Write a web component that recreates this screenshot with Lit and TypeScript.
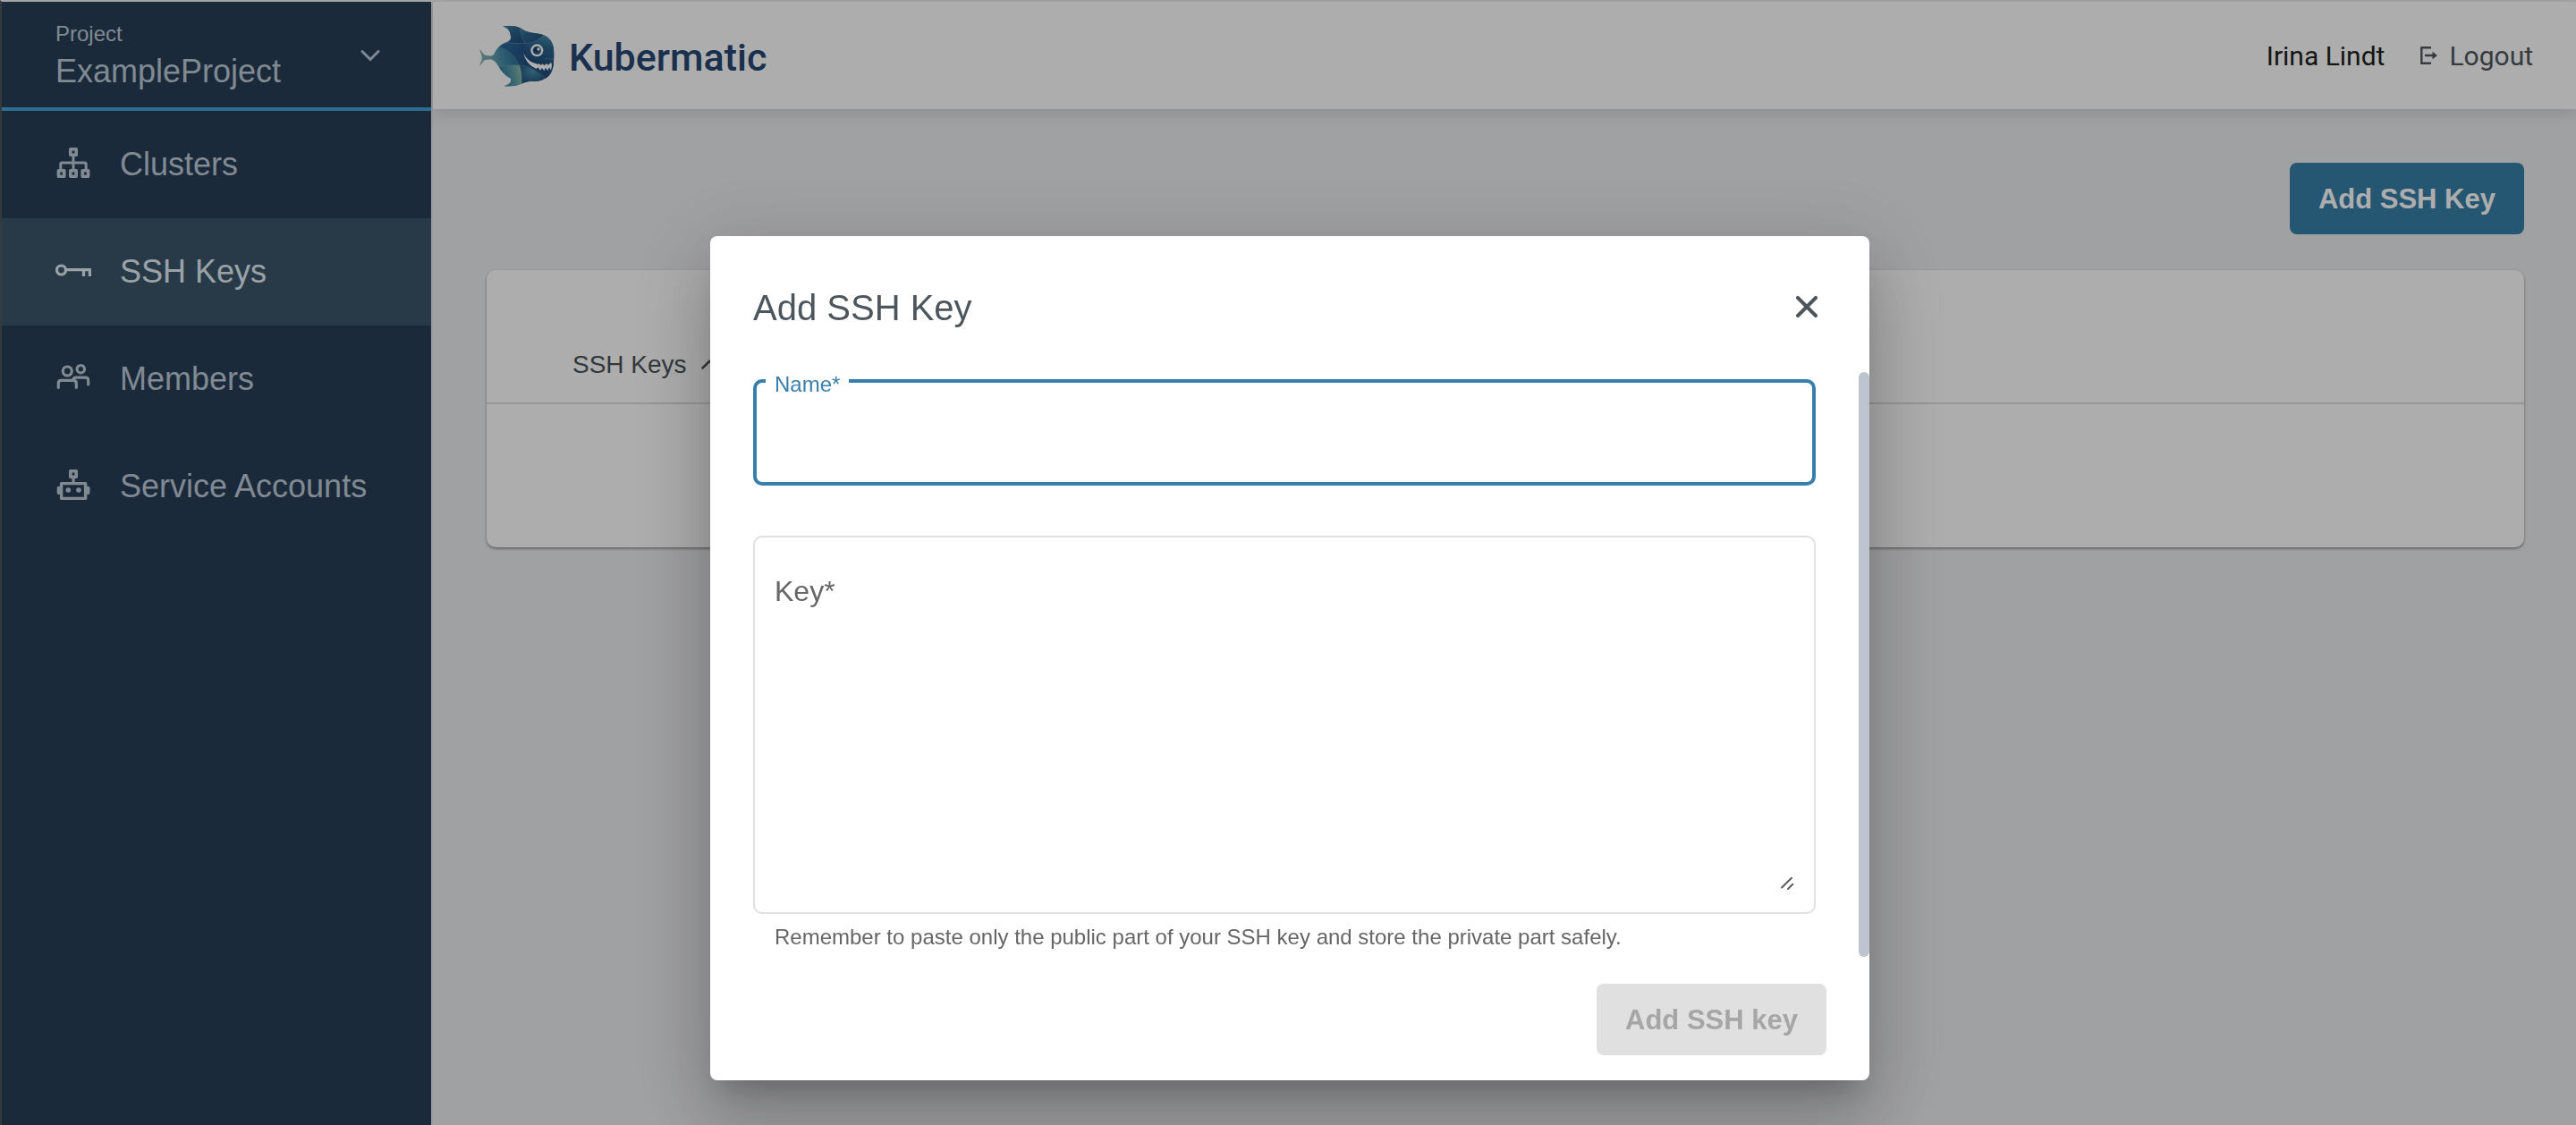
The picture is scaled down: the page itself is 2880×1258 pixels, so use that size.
import { LitElement, html, css, svg } from "lit";
import { customElement } from "lit/decorators.js";
import { classMap } from "lit/directives/class-map.js";

const clustersIcon = svg`
  <g fill="none" stroke="currentColor">
    <path stroke-width="3" d="M5.8 26V19.5Q5.8 18 7.3 18H32.7Q34.2 18 34.2 19.5V26M20 10V26" />
    <g stroke-width="3.6" stroke-linejoin="round">
      <rect x="16.8" y="2.8" width="6.4" height="6.4" />
      <rect x="3.4" y="26.8" width="6.4" height="6.4" />
      <rect x="16.8" y="26.8" width="6.4" height="6.4" />
      <rect x="30.2" y="26.8" width="6.4" height="6.4" />
    </g>
  </g>`;

const keyIcon = svg`
  <g fill="none" stroke="currentColor" stroke-width="3.2">
    <circle cx="6.5" cy="18" r="5" />
    <path d="M12 17.7H40M31.5 17V25M38.4 17V25" />
  </g>`;

const membersIcon = svg`
  <g fill="none" stroke="currentColor" stroke-width="3.2" stroke-linecap="round">
    <circle cx="13.3" cy="11" r="5" />
    <circle cx="28.3" cy="8.7" r="4.2" />
    <path d="M3.3 29.5V24.5Q3.3 21.3 6.5 21.3H20.1Q23.3 21.3 23.3 24.5V29.5" />
    <path d="M20 19.6Q21 18.2 23 18.2H33.5Q36.7 18.2 36.7 21.4V26" />
  </g>`;

const robotIcon = svg`
  <g fill="none" stroke="currentColor" stroke-linejoin="round">
    <rect x="16.8" y="2.8" width="6.4" height="6.4" stroke-width="3.6" />
    <path d="M20 10V16" stroke-width="3.2" />
    <rect x="6.6" y="16.6" width="27" height="16.8" stroke-width="3.4" />
  </g>
  <g fill="currentColor">
    <circle cx="14.3" cy="24" r="2.8" />
    <circle cx="26" cy="24" r="2.8" />
    <rect x="1.7" y="19.7" width="5" height="9.3" rx="2" />
    <rect x="33.5" y="19.7" width="5" height="9.3" rx="2" />
  </g>`;

const navItems = [
  { label: "Clusters", icon: clustersIcon, active: false },
  { label: "SSH Keys", icon: keyIcon, active: true },
  { label: "Members", icon: membersIcon, active: false },
  { label: "Service Accounts", icon: robotIcon, active: false },
];

@customElement("km-sidebar")
class KmSidebar extends LitElement {
  static styles = css`
    :host {
      display: block;
      box-sizing: border-box;
      width: 482px;
      background: #293f57;
      border-right: 2px solid #e2e3e6;
      color: #bfcad8;
      font-family: "Liberation Sans", Arial, sans-serif;
    }
    .project {
      box-sizing: border-box;
      display: flex;
      justify-content: space-between;
      align-items: center;
      width: 100%;
      height: 122px;
      margin: 0;
      padding: 0 58px 0 60px;
      border: 0;
      border-bottom: 4px solid #44a0d4;
      background: none;
      color: inherit;
      font: inherit;
      text-align: left;
    }
    .names {
      display: flex;
      flex-direction: column;
      padding-top: 6px;
    }
    .caption {
      font-size: 24px;
      line-height: 32px;
    }
    .name {
      font-size: 36px;
      line-height: 52px;
    }
    .chevron {
      width: 20px;
      height: 12px;
      padding-top: 2px;
      overflow: visible;
    }
    .item {
      display: flex;
      align-items: center;
      gap: 32px;
      height: 120px;
      padding-left: 60px;
      color: inherit;
      font-size: 36px;
      text-decoration: none;
    }
    .item.active {
      background: #3b566b;
      color: #e2eff5;
    }
    .icon {
      width: 40px;
      height: 40px;
    }
  `;

  render() {
    return html`
      <button class="project" type="button">
        <span class="names">
          <span class="caption">Project</span>
          <span class="name">ExampleProject</span>
        </span>
        <svg class="chevron" viewBox="0 0 20 12" aria-hidden="true">
          <path d="M1 1.5L10 10.5L19 1.5" fill="none" stroke="currentColor" stroke-width="3" stroke-linecap="round" />
        </svg>
      </button>
      <nav>
        ${navItems.map(
          (item) => html`
            <a class=${classMap({ item: true, active: item.active })} href="#">
              <svg class="icon" viewBox="0 0 40 40" aria-hidden="true">${item.icon}</svg>
              <span>${item.label}</span>
            </a>
          `
        )}
      </nav>
    `;
  }
}

@customElement("km-header")
class KmHeader extends LitElement {
  static styles = css`
    :host {
      box-sizing: border-box;
      display: flex;
      justify-content: space-between;
      align-items: center;
      height: 120px;
      padding: 0 48px 0 46px;
      background: #ffffff;
      box-shadow: 0 4px 16px rgba(0, 0, 0, 0.13);
      font-family: Roboto, sans-serif;
    }
    .brand {
      display: flex;
      align-items: center;
      gap: 6px;
      color: #284873;
      font-size: 43px;
      font-weight: 500;
      text-decoration: none;
    }
    .fish {
      width: 100px;
      height: 80px;
    }
    .text {
      padding-top: 4px;
    }
    .account {
      display: flex;
      align-items: center;
      gap: 40px;
      font-size: 30px;
      color: #1f1f1f;
    }
    .logout {
      display: flex;
      align-items: center;
      gap: 12px;
      color: #50585f;
      text-decoration: none;
    }
    .exit {
      width: 20px;
      height: 20px;
    }
  `;

  render() {
    return html`
      <a class="brand" href="#">
        <svg class="fish" viewBox="0 0 300 240" aria-hidden="true">
          <defs>
            <linearGradient id="body" gradientUnits="userSpaceOnUse" x1="20" y1="150" x2="225" y2="110">
              <stop offset="0" stop-color="#8fb8ac" />
              <stop offset="0.2" stop-color="#69a5b0" />
              <stop offset="0.42" stop-color="#3f86a6" />
              <stop offset="0.7" stop-color="#265f8d" />
              <stop offset="1" stop-color="#2b6088" />
            </linearGradient>
            <linearGradient id="mid" x1="0" y1="0" x2="1" y2="0.3">
              <stop offset="0" stop-color="#2e6c98" />
              <stop offset="1" stop-color="#204b7c" />
            </linearGradient>
            <linearGradient id="fin" x1="0" y1="0" x2="0.8" y2="1">
              <stop offset="0" stop-color="#498ea9" />
              <stop offset="0.5" stop-color="#2c638c" />
              <stop offset="1" stop-color="#234f7b" />
            </linearGradient>
            <linearGradient id="head" x1="0.8" y1="0" x2="0.6" y2="1">
              <stop offset="0" stop-color="#4b93ad" />
              <stop offset="0.35" stop-color="#2c6790" />
              <stop offset="1" stop-color="#1d4675" />
            </linearGradient>
            <linearGradient id="belly" x1="0.1" y1="0.7" x2="1" y2="0.5">
              <stop offset="0" stop-color="#327b9c" />
              <stop offset="0.6" stop-color="#589cae" />
              <stop offset="1" stop-color="#92b9a5" />
            </linearGradient>
            <radialGradient id="chin" cx="0.5" cy="0.35" r="0.6">
              <stop offset="0" stop-color="#4a8eaa" />
              <stop offset="1" stop-color="#23547f" />
            </radialGradient>
            <clipPath id="outline">
              <path d="M18 100C26 104 29 116 38 119C48 122 58 123 66 117C74 99 86 86 102 78C118 73 127 70 122 50C120 34 109 27 97 22C126 17 150 23 167 35C182 45 207 43 229 50C253 58 264 75 267 97C269 116 268 132 266 152C263 178 250 195 226 203C198 211 184 202 164 213C145 222 120 225 101 223C114 219 126 212 124 198C108 190 91 174 84 160C77 148 69 137 61 135C48 132 36 134 31 140C27 147 23 151 18 153C23 142 27 134 26 127C26 119 21 109 18 100Z" />
            </clipPath>
          </defs>
          <g clip-path="url(#outline)">
            <rect width="300" height="240" fill="url(#body)" />
            <path d="M80 92Q100 76 125 79Q165 83 180 79L210 200H160Q158 158 140 132Q116 100 80 92Z" fill="url(#mid)" />
            <path d="M90 15H155Q155 50 172 80Q140 82 104 76Z" fill="url(#fin)" />
            <path d="M153 15L240 50Q212 78 172 80Q158 60 153 15Z" fill="url(#fin)" />
            <path d="M236 48Q212 78 172 80Q164 110 190 138Q225 168 270 166V60Z" fill="url(#head)" />
            <path d="M84 158Q118 150 153 153Q163 180 160 225H90Z" fill="url(#belly)" />
            <path d="M154 153Q200 157 238 195L220 215H160Q163 178 154 153Z" fill="url(#chin)" />
            <path d="M178 155Q235 175 265 145L260 190L238 200Q210 170 178 155Z" fill="#23507e" />
            <g fill="none" stroke="#70a9c2" stroke-width="1.3">
              <path d="M104 76Q140 82 180 79Q212 76 238 48" />
              <path d="M153 20Q155 55 172 80" />
              <path d="M82 90Q116 100 140 132Q162 165 160 220" />
              <path d="M84 158Q118 150 153 153Q200 155 238 197" />
              <path d="M238 130Q255 134 268 132" />
            </g>
          </g>
          <path d="M165 110C174 132 192 144 208 147L212 150L218 147L223 153L230 148L235 154L243 147L248 152L259 143L261 152L258 170L252 160L247 171L240 161L235 172L228 162L222 170L215 160L209 165Q174 150 165 110Z" fill="#ffffff" />
          <circle cx="211" cy="103" r="21" fill="#ffffff" />
          <circle cx="211" cy="103" r="14" fill="#285984" />
          <circle cx="209" cy="101" r="7.5" fill="#173b60" />
          <circle cx="216" cy="99" r="5" fill="#ffffff" />
        </svg>
        <span class="text">Kubermatic</span>
      </a>
      <div class="account">
        <span>Irina Lindt</span>
        <a class="logout" href="#">
          <svg class="exit" viewBox="0 0 20 20" aria-hidden="true">
            <path d="M12 1.2H1.3V18.8H12M5 10H15" fill="none" stroke="currentColor" stroke-width="2.4" />
            <path d="M13.5 5.8L19 10L13.5 14.2Z" fill="currentColor" />
          </svg>
          <span>Logout</span>
        </a>
      </div>
    `;
  }
}

@customElement("km-key-list")
class KmKeyList extends LitElement {
  static styles = css`
    :host {
      display: flex;
      flex-direction: column;
      gap: 40px;
      padding: 60px 58px 60px 60px;
      font-family: "Liberation Sans", Arial, sans-serif;
    }
    .add {
      align-self: flex-end;
      height: 80px;
      padding: 2px 32px 0;
      border: 0;
      border-radius: 8px;
      background: #3880a9;
      color: #ffffff;
      font: bold 31px "Liberation Sans", Arial, sans-serif;
    }
    .card {
      overflow: hidden;
      border-radius: 10px;
      background: #ffffff;
      box-shadow: 0 2px 3px rgba(0, 0, 0, 0.32), 0 0 2px rgba(0, 0, 0, 0.15);
    }
    .table {
      width: 100%;
      border-collapse: collapse;
    }
    .heading {
      height: 60px;
      padding: 76px 0 12px 96px;
      border-bottom: 2px solid #dedede;
      text-align: left;
      font-weight: normal;
    }
    .sort {
      display: flex;
      align-items: center;
      gap: 16px;
      padding: 0;
      border: 0;
      background: none;
      color: #4a5258;
      font: 28px "Liberation Sans", Arial, sans-serif;
    }
    .arrow {
      width: 18px;
      height: 12px;
    }
    .cell {
      height: 160px;
      padding: 0;
    }
  `;

  render() {
    return html`
      <button class="add" type="button">Add SSH Key</button>
      <div class="card">
        <table class="table">
          <thead>
            <tr>
              <th class="heading" scope="col">
                <button class="sort" type="button">
                  SSH Keys
                  <svg class="arrow" viewBox="0 0 18 12" aria-hidden="true">
                    <path d="M1.5 9.5L9 2L16.5 9.5" fill="none" stroke="currentColor" stroke-width="2.5" stroke-linecap="round" />
                  </svg>
                </button>
              </th>
            </tr>
          </thead>
          <tbody>
            <tr>
              <td class="cell"></td>
            </tr>
          </tbody>
        </table>
      </div>
    `;
  }
}

@customElement("km-add-key-dialog")
class KmAddKeyDialog extends LitElement {
  static styles = css`
    :host {
      position: fixed;
      inset: 0;
      box-sizing: border-box;
      display: flex;
      justify-content: center;
      align-items: flex-start;
      padding: 264px 0 0 4px;
      overflow: hidden;
      background: rgba(0, 0, 0, 0.32);
      font-family: "Liberation Sans", Arial, sans-serif;
    }
    .dialog {
      position: static;
      box-sizing: border-box;
      width: 1296px;
      max-width: 90vw;
      margin: 0;
      padding: 56px 0 28px;
      border: 0;
      border-radius: 8px;
      background: #ffffff;
      box-shadow: 0 22px 30px -14px rgba(0, 0, 0, 0.2), 0 48px 76px 6px rgba(0, 0, 0, 0.14),
        0 18px 92px 16px rgba(0, 0, 0, 0.12);
    }
    .top {
      display: flex;
      justify-content: space-between;
      align-items: center;
      height: 48px;
      padding: 0 48px;
    }
    .title {
      margin: 0;
      color: #4e565d;
      font-size: 40px;
      font-weight: normal;
      line-height: 48px;
    }
    .close {
      display: flex;
      justify-content: center;
      align-items: center;
      width: 44px;
      height: 44px;
      padding: 0 0 2px;
      border: 0;
      background: none;
      color: #4e565d;
    }
    .cross {
      width: 24px;
      height: 24px;
    }
    .content {
      display: flex;
      gap: 48px;
      margin-top: 42px;
      padding-left: 48px;
    }
    .fields {
      flex: 1;
      min-width: 0;
      padding-bottom: 8px;
    }
    .bar {
      width: 12px;
      margin: 6px 0 2px;
      border-radius: 6px;
      background: #bdc4cf;
    }
    .outline {
      min-width: 0;
      margin: 0;
      padding: 0 10px;
      border: 4px solid #387fab;
      border-radius: 10px;
    }
    .legend {
      padding: 8px 10px 0;
      color: #387fab;
      font-size: 24px;
      line-height: 24px;
    }
    .input {
      display: block;
      box-sizing: border-box;
      width: 100%;
      height: 97px;
      padding: 0 10px 16px;
      border: 0;
      outline: 0;
      background: none;
      color: #4e565d;
      font: 32px "Liberation Sans", Arial, sans-serif;
    }
    .keybox {
      position: relative;
      margin-top: 56px;
      padding: 40px 22px 24px;
      border: 2px solid #e0e0e0;
      border-radius: 10px;
    }
    .keylabel {
      position: absolute;
      top: 40px;
      left: 22px;
      color: #666666;
      font-size: 32px;
      line-height: 40px;
      pointer-events: none;
    }
    .textarea {
      display: block;
      box-sizing: border-box;
      width: 100%;
      height: 355px;
      padding: 0;
      border: 0;
      outline: 0;
      resize: none;
      background: none;
      color: #4e565d;
      font: 32px/40px "Liberation Sans", Arial, sans-serif;
    }
    .grip {
      position: absolute;
      right: 22px;
      bottom: 24px;
      width: 16px;
      height: 16px;
    }
    .hint {
      margin: 10px 0 0;
      padding: 0 24px;
      color: #666666;
      font-size: 24px;
      line-height: 32px;
    }
    .actions {
      display: flex;
      justify-content: flex-end;
      padding: 28px 48px 0;
    }
    .submit {
      height: 80px;
      padding: 2px 32px 0;
      border: 0;
      border-radius: 8px;
      background: #e0e0e0;
      color: #a6a6a6;
      font: bold 31px "Liberation Sans", Arial, sans-serif;
    }
  `;

  render() {
    return html`
      <dialog class="dialog" open aria-labelledby="title">
        <div class="top">
          <h2 class="title" id="title">Add SSH Key</h2>
          <button class="close" type="button" aria-label="Close">
            <svg class="cross" viewBox="0 0 24 24" aria-hidden="true">
              <path d="M2 2L22 22M22 2L2 22" fill="none" stroke="currentColor" stroke-width="4" stroke-linecap="round" />
            </svg>
          </button>
        </div>
        <div class="content">
          <div class="fields">
            <fieldset class="outline">
              <legend class="legend"><label for="name">Name*</label></legend>
              <input class="input" id="name" type="text" required />
            </fieldset>
            <div class="keybox">
              <label class="keylabel" for="key">Key*</label>
              <textarea class="textarea" id="key" required></textarea>
              <svg class="grip" viewBox="0 0 16 16" aria-hidden="true">
                <path d="M2 12.5L13 1.8M9 14L14.2 8.8" fill="none" stroke="#5c5c5c" stroke-width="2" stroke-linecap="round" />
              </svg>
            </div>
            <p class="hint">Remember to paste only the public part of your SSH key and store the private part safely.</p>
          </div>
          <div class="bar"></div>
        </div>
        <div class="actions">
          <button class="submit" type="submit" disabled>Add SSH key</button>
        </div>
      </dialog>
    `;
  }
}

@customElement("app-root")
class AppRoot extends LitElement {
  static styles = css`
    :host {
      box-sizing: border-box;
      display: flex;
      min-height: 100vh;
      border-top: 2px solid #f4f4f4;
      border-left: 2px solid #50565a;
      background: #ecedf0;
    }
    .side {
      flex: none;
    }
    .page {
      flex: 1;
      min-width: 0;
    }
  `;

  render() {
    return html`
      <km-sidebar class="side"></km-sidebar>
      <div class="page">
        <km-header></km-header>
        <km-key-list></km-key-list>
      </div>
      <km-add-key-dialog></km-add-key-dialog>
    `;
  }
}
